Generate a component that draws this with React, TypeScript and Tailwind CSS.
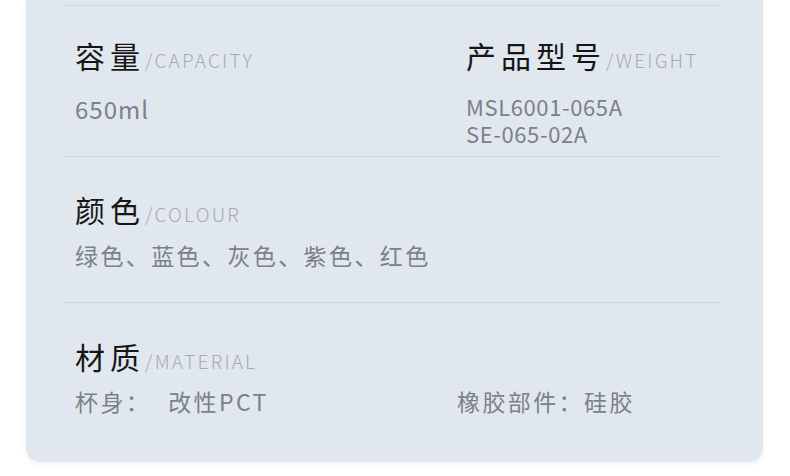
const font = { fontFamily: '"Noto Sans CJK SC", "Noto Sans", sans-serif' };

const Heading = ({ zh, en, spacing }: { zh: string; en: string; spacing: string }) => (
  <div className="flex items-baseline h-[40px]">
    <span className={`text-[30px] leading-[40px] text-[#161616] ${spacing}`}>{zh}</span>
    <span className="text-[19px] leading-[40px] font-light tracking-[2.2px] text-[#a7abb1]">/{en}</span>
  </div>
);

export default function App() {
  return (
    <div className="w-[790px] h-[476px] bg-white overflow-hidden" style={font}>
      <div className="ml-[26px] w-[737px] h-[462px] bg-[#e1e7ef] rounded-b-[14px] shadow-[0_2px_6px_rgba(0,0,0,0.06)] pt-[5px] pl-[38px] pr-[43px]">
        {/* capacity / model */}
        <section className="border-t border-[#cfd5de] h-[151px] pt-[29px] pl-[11px] flex">
          <div className="w-[391px]">
            <Heading zh="容量" en="CAPACITY" spacing="tracking-[5px]" />
            <div className="mt-[20px] text-[24px] leading-[28px] tracking-[1px] text-[#7c8088]">650ml</div>
          </div>
          <div>
            <Heading zh="产品型号" en="WEIGHT" spacing="tracking-[5px]" />
            <div className="mt-[18px] text-[22px] leading-[27px] tracking-[0.6px] text-[#7c8088]">
              <div>MSL6001-065A</div>
              <div>SE-065-02A</div>
            </div>
          </div>
        </section>

        {/* colour */}
        <section className="border-t border-[#cfd5de] h-[146px] pt-[32px] pl-[11px]">
          <Heading zh="颜色" en="COLOUR" spacing="tracking-[5px]" />
          <div className="mt-[11px] text-[23px] leading-[30px] tracking-[2.4px] text-[#7c8088]">
            绿色、蓝色、灰色、紫色、红色
          </div>
        </section>

        {/* material */}
        <section className="border-t border-[#cfd5de] pt-[33px] pl-[11px]">
          <Heading zh="材质" en="MATERIAL" spacing="tracking-[5px]" />
          <div className="mt-[10px] flex text-[23px] leading-[30px] tracking-[2.4px] text-[#7c8088]">
            <div className="w-[382px] flex">
              <span>杯身：</span>
              <span className="ml-[17px]">改性PCT</span>
            </div>
            <span>橡胶部件：硅胶</span>
          </div>
        </section>
      </div>
    </div>
  );
}
